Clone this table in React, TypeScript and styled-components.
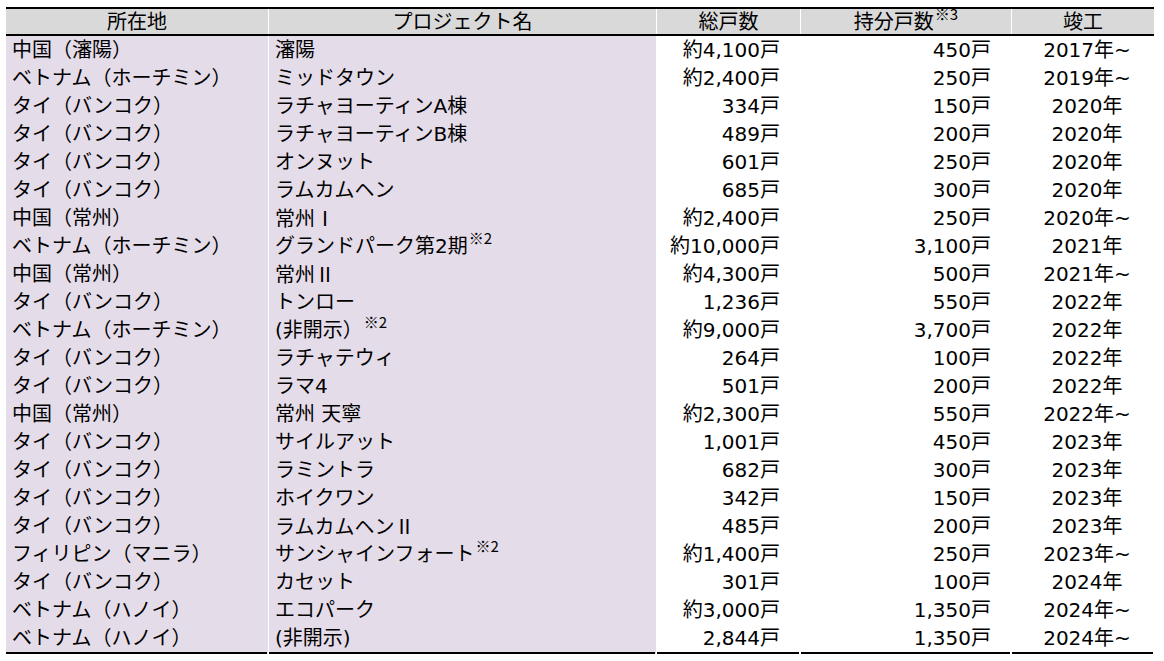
import React from "react";
import styled, { createGlobalStyle } from "styled-components";

const GlobalStyle = createGlobalStyle`
  html, body { margin: 0; padding: 0; background: #ffffff; }
  body {
    font-family: "DejaVu Sans", "Noto Sans CJK JP", sans-serif;
    color: #000000;
  }
`;

const COLS = "262px 388px 144px 211px 143px";
const PURPLE = "#e5dce9";
const GRAY = "#d9d9d9";

const Page = styled.div`
  padding: 7px 0 0 6px;
`;

const Table = styled.div`
  width: 1148px;
  border-top: 2px solid #000;
  font-size: 20px;
`;

const HeaderRow = styled.div`
  display: grid;
  grid-template-columns: ${COLS};
  height: 25px;
  border-bottom: 2px solid #000;
`;

const HeaderCell = styled.div<{ $first?: boolean }>`
  background: ${GRAY};
  border-left: ${(p) => (p.$first ? "none" : "1px solid #fff")};
  display: flex;
  align-items: center;
  justify-content: center;
  box-sizing: border-box;
  white-space: nowrap;
  line-height: 1;
`;

const Row = styled.div<{ $last?: boolean }>`
  display: grid;
  grid-template-columns: ${COLS};
  height: ${(p) => (p.$last ? "30px" : "28px")};
`;

const Cell = styled.div<{
  $first?: boolean;
  $shade?: boolean;
  $align: "left" | "right" | "center";
  $last?: boolean;
}>`
  display: flex;
  align-items: center;
  justify-content: ${(p) =>
    p.$align === "left" ? "flex-start" : p.$align === "right" ? "flex-end" : "center"};
  padding-left: ${(p) => (p.$align === "left" ? "6px" : "0")};
  padding-right: ${(p) => (p.$align === "right" ? "20px" : "0")};
  padding-bottom: ${(p) => (p.$last ? "2px" : "0")};
  border-left: ${(p) => (p.$first ? "none" : "1px solid #fff")};
  background-color: ${(p) => (p.$shade ? PURPLE : "#fff")};
  background-image: ${(p) =>
    p.$last ? "linear-gradient(#000, #000)" : "none"};
  background-repeat: no-repeat;
  background-position: left bottom;
  background-size: calc(100% - 1px) 2px;
  white-space: nowrap;
  line-height: 1;
  box-sizing: border-box;
`;

const Text = styled.span`
  line-height: 1;
`;

const Note = styled.sup`
  font-family: "Noto Sans CJK JP", sans-serif;
  font-size: 15px;
  line-height: 0;
  vertical-align: 9px;
  margin-left: 1px;
`;

const Numeral = styled.span`
  font-family: "Noto Sans CJK JP", sans-serif;
`;

const Year = styled.span`
  padding-left: 8px;
`;

type R = { loc: string; name: string; note?: string; total: string; share: string; year: string };

const rows: R[] = [
  { loc: "中国（瀋陽）", name: "瀋陽", total: "約4,100戸", share: "450戸", year: "2017年~" },
  { loc: "ベトナム（ホーチミン）", name: "ミッドタウン", total: "約2,400戸", share: "250戸", year: "2019年~" },
  { loc: "タイ（バンコク）", name: "ラチャヨーティンA棟", total: "334戸", share: "150戸", year: "2020年" },
  { loc: "タイ（バンコク）", name: "ラチャヨーティンB棟", total: "489戸", share: "200戸", year: "2020年" },
  { loc: "タイ（バンコク）", name: "オンヌット", total: "601戸", share: "250戸", year: "2020年" },
  { loc: "タイ（バンコク）", name: "ラムカムヘン", total: "685戸", share: "300戸", year: "2020年" },
  { loc: "中国（常州）", name: "常州Ⅰ", total: "約2,400戸", share: "250戸", year: "2020年~" },
  { loc: "ベトナム（ホーチミン）", name: "グランドパーク第2期", note: "※2", total: "約10,000戸", share: "3,100戸", year: "2021年" },
  { loc: "中国（常州）", name: "常州Ⅱ", total: "約4,300戸", share: "500戸", year: "2021年~" },
  { loc: "タイ（バンコク）", name: "トンロー", total: "1,236戸", share: "550戸", year: "2022年" },
  { loc: "ベトナム（ホーチミン）", name: "(非開示）", note: "※2", total: "約9,000戸", share: "3,700戸", year: "2022年" },
  { loc: "タイ（バンコク）", name: "ラチャテウィ", total: "264戸", share: "100戸", year: "2022年" },
  { loc: "タイ（バンコク）", name: "ラマ4", total: "501戸", share: "200戸", year: "2022年" },
  { loc: "中国（常州）", name: "常州 天寧", total: "約2,300戸", share: "550戸", year: "2022年~" },
  { loc: "タイ（バンコク）", name: "サイルアット", total: "1,001戸", share: "450戸", year: "2023年" },
  { loc: "タイ（バンコク）", name: "ラミントラ", total: "682戸", share: "300戸", year: "2023年" },
  { loc: "タイ（バンコク）", name: "ホイクワン", total: "342戸", share: "150戸", year: "2023年" },
  { loc: "タイ（バンコク）", name: "ラムカムヘンⅡ", total: "485戸", share: "200戸", year: "2023年" },
  { loc: "フィリピン（マニラ）", name: "サンシャインフォート", note: "※2", total: "約1,400戸", share: "250戸", year: "2023年~" },
  { loc: "タイ（バンコク）", name: "カセット", total: "301戸", share: "100戸", year: "2024年" },
  { loc: "ベトナム（ハノイ）", name: "エコパーク", total: "約3,000戸", share: "1,350戸", year: "2024年~" },
  { loc: "ベトナム（ハノイ）", name: "(非開示)", total: "2,844戸", share: "1,350戸", year: "2024年~" },
];

function Name({ text }: { text: string }) {
  const parts = text.split(/([ⅠⅡ])/);
  return (
    <>
      {parts.map((p, i) =>
        p === "Ⅰ" || p === "Ⅱ" ? <Numeral key={i}>{p}</Numeral> : <React.Fragment key={i}>{p}</React.Fragment>
      )}
    </>
  );
}

export default function App() {
  const n = rows.length;
  return (
    <Page>
      <GlobalStyle />
      <Table>
        <HeaderRow>
          <HeaderCell $first>所在地</HeaderCell>
          <HeaderCell>プロジェクト名</HeaderCell>
          <HeaderCell>総戸数</HeaderCell>
          <HeaderCell>
            <Text>
              持分戸数<Note>※3</Note>
            </Text>
          </HeaderCell>
          <HeaderCell>竣工</HeaderCell>
        </HeaderRow>
        {rows.map((r, i) => {
          const last = i === n - 1;
          return (
            <Row key={i} $last={last}>
              <Cell $first $shade $align="left" $last={last}>{r.loc}</Cell>
              <Cell $shade $align="left" $last={last}>
                <Text>
                  <Name text={r.name} />
                  {r.note && <Note>{r.note}</Note>}
                </Text>
              </Cell>
              <Cell $align="right" $last={last}>{r.total}</Cell>
              <Cell $align="right" $last={last}>{r.share}</Cell>
              <Cell $align="center" $last={last}>
                <Year>{r.year}</Year>
              </Cell>
            </Row>
          );
        })}
      </Table>
    </Page>
  );
}
